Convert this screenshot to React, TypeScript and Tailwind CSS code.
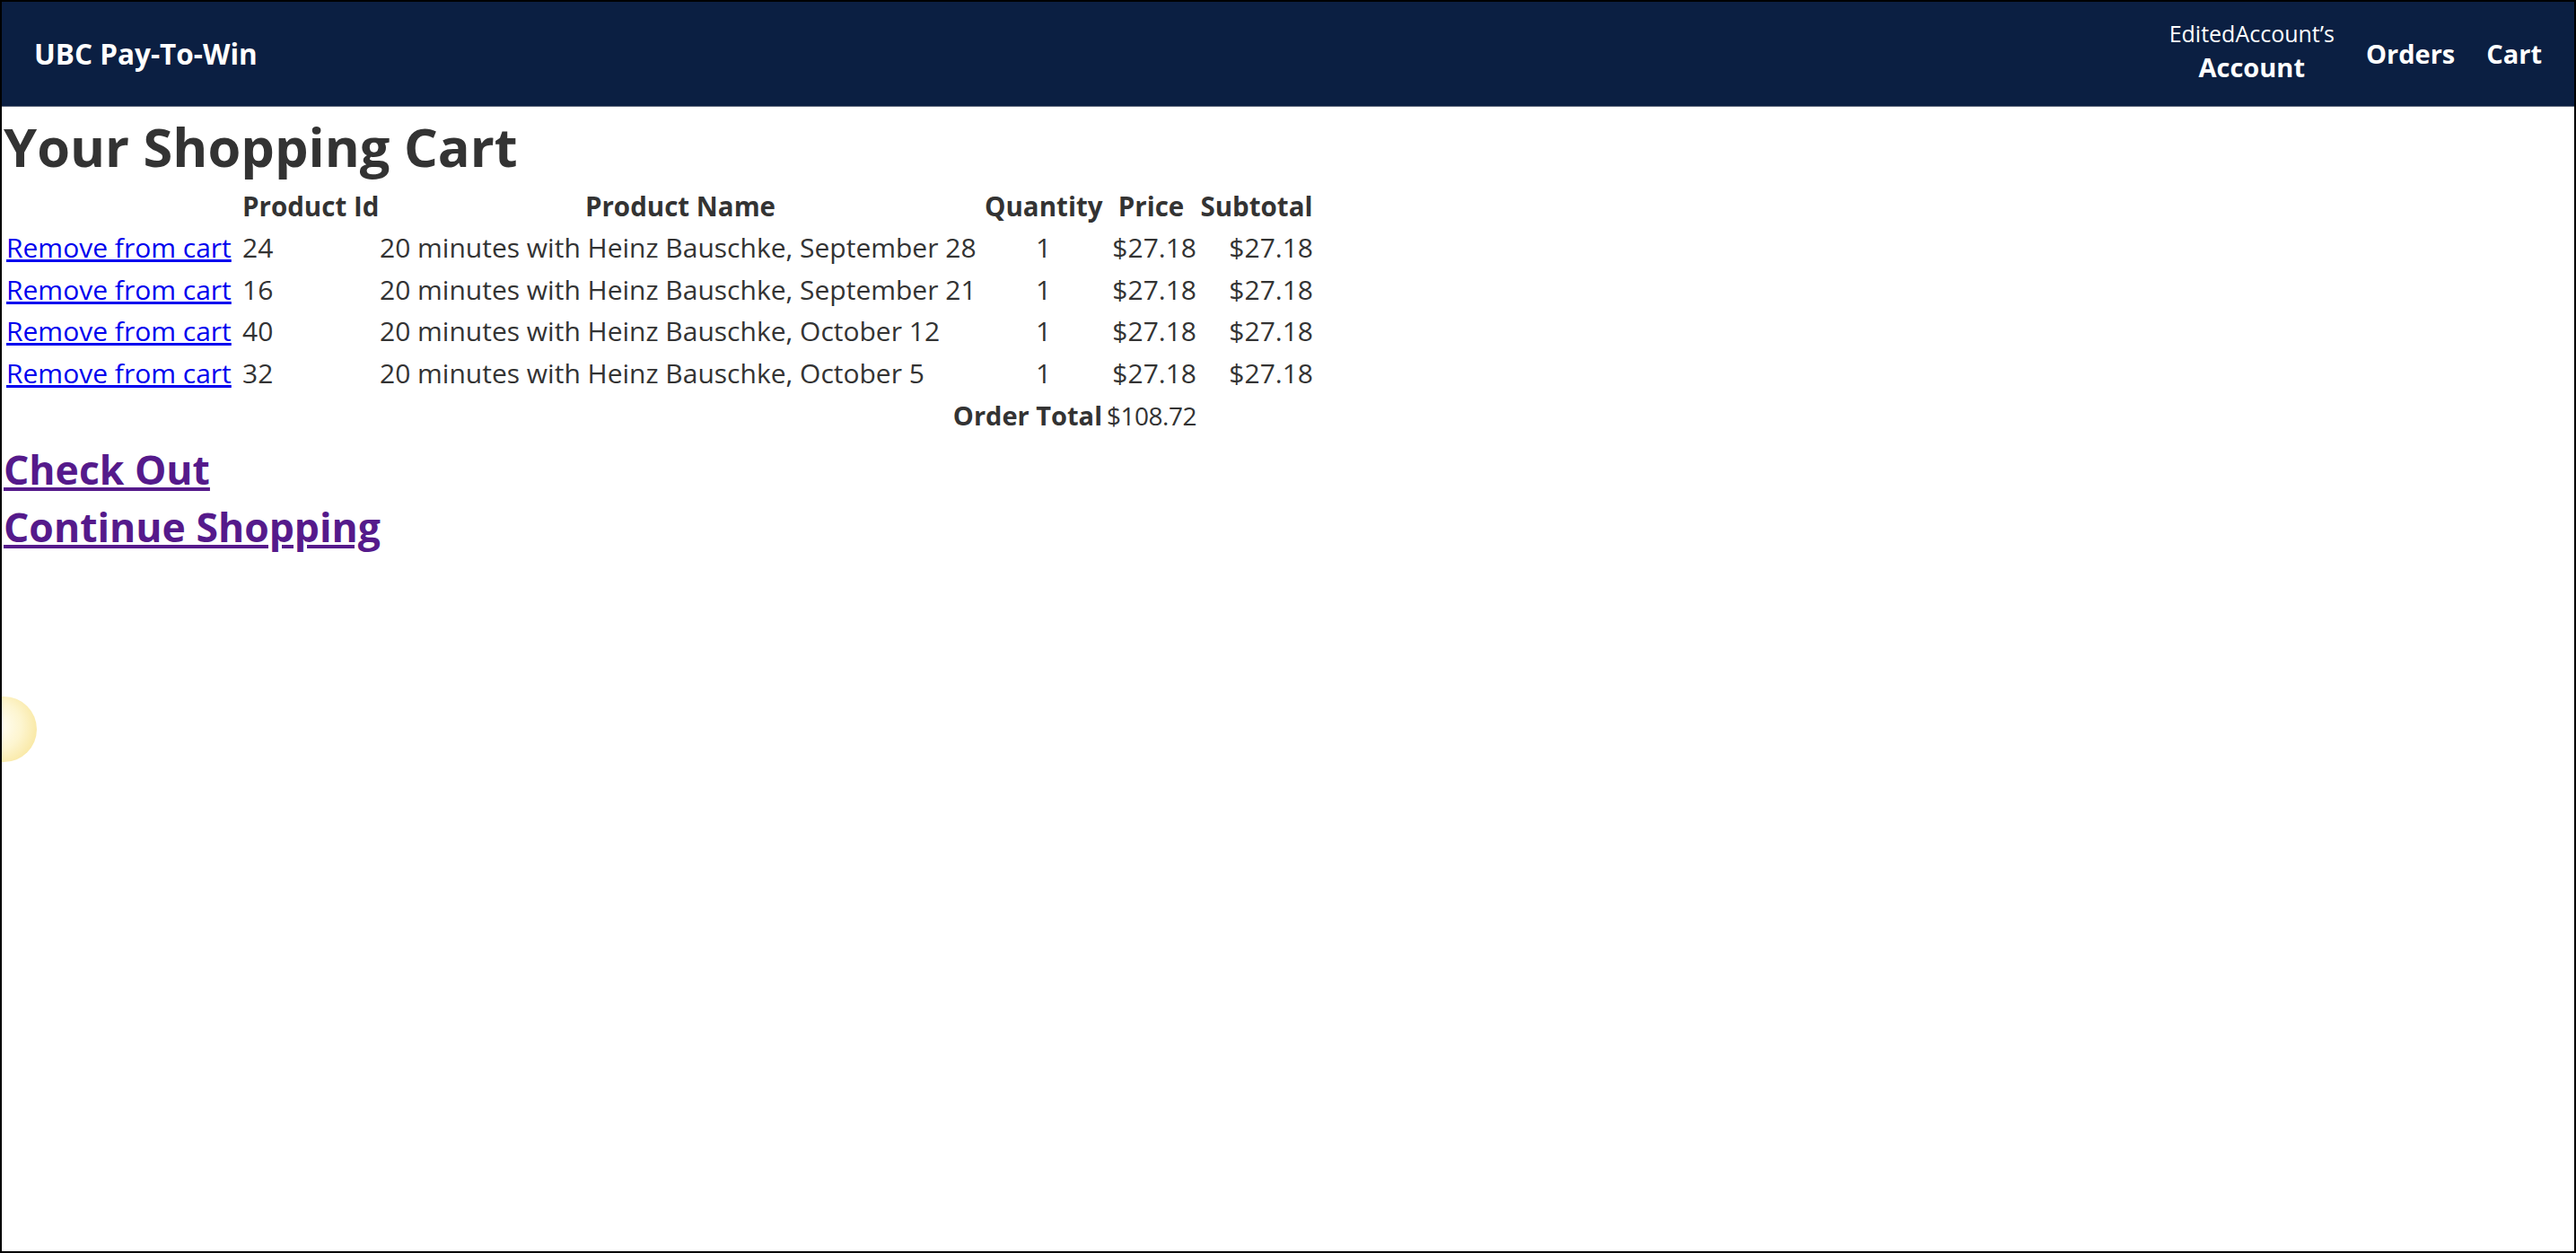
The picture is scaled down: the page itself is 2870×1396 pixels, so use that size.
const ROWS = [
  { id: 24, name: '20 minutes with Heinz Bauschke, September 28' },
  { id: 16, name: '20 minutes with Heinz Bauschke, September 21' },
  { id: 40, name: '20 minutes with Heinz Bauschke, October 12' },
  { id: 32, name: '20 minutes with Heinz Bauschke, October 5' },
];

export default function App() {
  return (
    <div className="relative h-[1396px] w-full overflow-hidden border-2 border-black bg-white font-['Open_Sans',sans-serif] text-[#333]">
      <header className="flex h-[117px] items-center justify-between border-b border-[#5b6478] bg-[#0b1f42] px-9 text-white">
        <a href="#" className="text-[31.5px] font-bold">
          UBC Pay-To-Win
        </a>
        <nav className="flex items-center gap-[35px]">
          <a href="#" className="flex flex-col items-center pb-[4px]">
            <span className="text-[25px] leading-[34px]">EditedAccount’s</span>
            <span className="text-[29px] font-bold leading-[42px]">Account</span>
          </a>
          <a href="#" className="text-[29px] font-bold">
            Orders
          </a>
          <a href="#" className="text-[29px] font-bold">
            Cart
          </a>
        </nav>
      </header>

      <main className="pl-[2px]">
        <h1 className="text-[59.5px] font-bold leading-[88px]">Your Shopping Cart</h1>
        <table className="ml-px w-[1460px] table-fixed border-collapse whitespace-nowrap text-[30px]">
          <colgroup>
            <col className="w-[263px]" />
            <col className="w-[153px]" />
            <col className="w-[674px]" />
            <col className="w-[135px]" />
            <col className="w-[105px]" />
            <col className="w-[130px]" />
          </colgroup>
          <thead>
            <tr className="text-[29.5px] font-bold leading-[46px]">
              <th className="px-[2px]"></th>
              <th className="px-[2px] text-left">Product Id</th>
              <th className="px-[2px] text-center">Product Name</th>
              <th className="px-[2px] text-center">Quantity</th>
              <th className="px-[2px] text-center">Price</th>
              <th className="px-[2px] text-center">Subtotal</th>
            </tr>
          </thead>
          <tbody className="leading-[46.5px]">
            {ROWS.map((r) => (
              <tr key={r.id}>
                <td className="px-[2px]">
                  <a href="#" className="text-[#0000ee] underline">
                    Remove from cart
                  </a>
                </td>
                <td className="px-[2px]">{r.id}</td>
                <td className="px-[2px]">{r.name}</td>
                <td className="px-[2px] text-center">1</td>
                <td className="px-[2px] text-right">$27.18</td>
                <td className="px-[2px] text-right">$27.18</td>
              </tr>
            ))}
            <tr className="leading-[48px]">
              <td colSpan={4} className="px-[2px] text-right text-[29px] font-bold">
                Order Total
              </td>
              <td className="px-[2px]">
                <div className="flex justify-end text-[28px] tracking-[-0.5px]">$108.72</div>
              </td>
              <td></td>
            </tr>
          </tbody>
        </table>
        <div className="mt-[4px] flex flex-col">
          <a href="#" className="self-start text-[44.5px] font-bold leading-[64px] text-[#551a8b] underline">
            Check Out
          </a>
          <a href="#" className="self-start text-[44.5px] font-bold leading-[64px] text-[#551a8b] underline">
            Continue Shopping
          </a>
        </div>
      </main>

      <div className="absolute left-[-34px] top-[774px] h-[73px] w-[73px] rounded-full bg-[radial-gradient(circle_at_40%_45%,#fffef6_0%,#fdf5cf_45%,#f6df86_100%)]" />
    </div>
  );
}
